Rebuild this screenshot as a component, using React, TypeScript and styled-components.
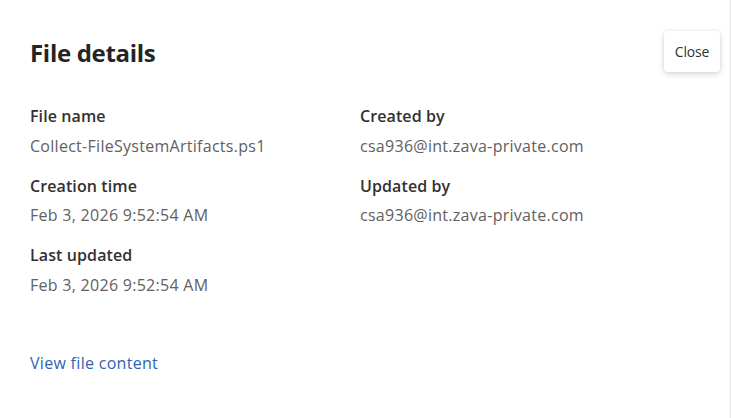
import React from "react";
import styled, { createGlobalStyle } from "styled-components";

const Global = createGlobalStyle`
  html, body { margin: 0; padding: 0; background: #ffffff; }
  body { font-family: "Open Sans", "Noto Sans", "Liberation Sans", sans-serif; }
  #root { height: 418px; }
`;

const Page = styled.div`
  width: 731px;
  height: 418px;
  box-sizing: border-box;
  border-right: 1px solid #e6e6e6;
  background: #fff;
  position: relative;
  padding: 37px 0 0 30px;
  display: flex;
  flex-direction: column;
`;

const Title = styled.h1`
  margin: 0;
  font-size: 24px;
  line-height: 32px;
  font-weight: 700;
  color: #242424;
  letter-spacing: -0.3px;
`;

const Grid = styled.div`
  display: grid;
  grid-template-columns: 330px 330px;
  grid-auto-rows: 69.5px;
  margin-top: 37px;
`;

const Field = styled.div`
  display: flex;
  flex-direction: column;
  gap: 9.5px;
`;

const Label = styled.div`
  font-size: 16px;
  line-height: 20px;
  font-weight: 600;
  color: #323130;
  letter-spacing: 0.1px;
`;

const Value = styled.div`
  font-size: 16px;
  line-height: 20px;
  font-weight: 400;
  color: #616161;
  letter-spacing: 0.28px;
`;

const Link = styled.a`
  margin-top: 38px;
  font-size: 16px;
  line-height: 20px;
  color: #2f63b0;
  text-decoration: none;
  cursor: pointer;
  align-self: flex-start;
  letter-spacing: 0.3px;
`;

const CloseButton = styled.button`
  position: absolute;
  top: 31px;
  right: 10px;
  width: 56px;
  height: 41px;
  border: none;
  border-radius: 4px;
  background: #fff;
  box-shadow: 0 2px 6px rgba(0, 0, 0, 0.16), 0 0 2px rgba(0, 0, 0, 0.1);
  font-family: inherit;
  font-size: 14px;
  letter-spacing: -0.2px;
  color: #323130;
  cursor: pointer;
  padding: 0;
`;

const fields: Array<[string, string]> = [
  ["File name", "Collect-FileSystemArtifacts.ps1"],
  ["Created by", "csa936@int.zava-private.com"],
  ["Creation time", "Feb 3, 2026 9:52:54 AM"],
  ["Updated by", "csa936@int.zava-private.com"],
  ["Last updated", "Feb 3, 2026 9:52:54 AM"],
];

export default function App() {
  return (
    <>
      <Global />
      <Page>
        <Title>File details</Title>
        <Grid>
          {fields.map(([label, value]) => (
            <Field key={label}>
              <Label>{label}</Label>
              <Value>{value}</Value>
            </Field>
          ))}
        </Grid>
        <Link>View file content</Link>
        <CloseButton>Close</CloseButton>
      </Page>
    </>
  );
}
